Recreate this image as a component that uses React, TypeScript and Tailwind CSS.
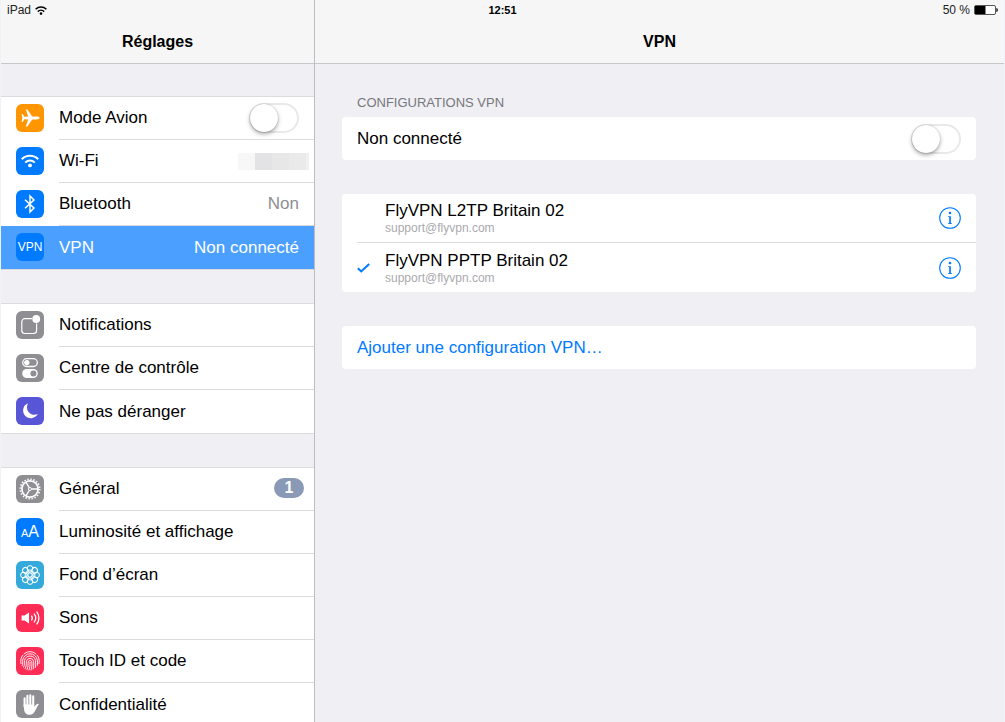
import type { ReactNode } from "react";

/* ---------- ICONS ---------- */

function IconTile({ color, children }: { color: string; children: ReactNode }) {
  return (
    <span
      className={`mb-0.5 flex h-7 w-7 shrink-0 items-center justify-center overflow-hidden rounded-md text-white ${color}`}
    >
      {children}
    </span>
  );
}

function PlaneIcon() {
  return (
    <svg viewBox="0 0 28 28" className="h-7 w-7" fill="currentColor">
      <path d="M23.6 14c0-.9-1.4-1.4-3-1.4h-4.4L11.4 5.4H9.8l2.4 7.2-3.9.2L6.8 10H5.6l.7 4-.7 4h1.2l1.5-2.8 3.9.2-2.4 7.2h1.6l4.8-7.2h4.4c1.6 0 3-.5 3-1.4z" />
    </svg>
  );
}

function WifiIcon() {
  return (
    <svg
      viewBox="0 0 28 28"
      className="h-7 w-7"
      fill="none"
      stroke="currentColor"
      strokeWidth="2"
    >
      <path d="M5.8 12.2a11.6 11.6 0 0 1 16.4 0" />
      <path d="M9.2 15.6a6.8 6.8 0 0 1 9.6 0" />
      <circle cx="14" cy="18.4" r="1.9" fill="currentColor" stroke="none" />
    </svg>
  );
}

function BluetoothIcon() {
  return (
    <svg
      viewBox="0 0 28 28"
      className="h-7 w-7"
      fill="none"
      stroke="currentColor"
      strokeWidth="1.5"
    >
      <path d="M9 9.8l9 8.2-4 4V6l4 4-9 8.2" />
    </svg>
  );
}

function NotificationsIcon() {
  return (
    <svg viewBox="0 0 28 28" className="h-7 w-7" fill="none">
      <path
        d="M16 7.7H8.8a3 3 0 0 0-3 3v8.8a3 3 0 0 0 3 3h8.8a3 3 0 0 0 3-3v-7"
        stroke="currentColor"
        strokeWidth="1.2"
      />
      <circle cx="20.2" cy="8" r="3.9" fill="currentColor" />
    </svg>
  );
}

function ControlCenterIcon() {
  return (
    <svg viewBox="0 0 28 28" className="h-7 w-7" fill="none">
      <rect x="6.7" y="4.7" width="14.6" height="7.8" rx="3.9" stroke="currentColor" strokeWidth="1.3" />
      <circle cx="10.8" cy="8.6" r="2.7" fill="currentColor" />
      <rect x="6.2" y="15" width="15.6" height="9" rx="4.5" fill="currentColor" />
      <circle cx="17.4" cy="19.5" r="3" fill="#8e8e93" />
    </svg>
  );
}

function MoonIcon() {
  return (
    <svg viewBox="0 0 28 28" className="h-7 w-7" fill="currentColor">
      <path d="M12 6.2a7.8 7.8 0 1 0 9.8 10.9c-3 1.4-6.6.9-8.8-1.6-2.4-2.6-2.6-6.4-1-9.3z" />
    </svg>
  );
}

function GearIcon() {
  return (
    <svg viewBox="0 0 28 28" className="h-7 w-7" fill="none" stroke="currentColor">
      <circle cx="14" cy="14" r="9.7" strokeWidth="1.8" strokeDasharray="1.5 1.547" />
      <circle cx="14" cy="14" r="8.1" strokeWidth="1.7" />
      <circle cx="14" cy="14" r="1.5" strokeWidth="1" />
      <path d="M15.5 14H22M13.2 12.7L10 7.2M13.2 15.3L10 20.8" strokeWidth="1.3" />
    </svg>
  );
}

const PETALS = [0, 45, 90, 135, 180, 225, 270, 315];

function FlowerIcon() {
  return (
    <svg viewBox="0 0 28 28" className="h-7 w-7" fill="none" stroke="currentColor" strokeWidth="1">
      {PETALS.map((angle) => (
        <circle key={angle} cx="14" cy="7.4" r="2.8" transform={`rotate(${angle} 14 14)`} />
      ))}
      {PETALS.map((angle) => (
        <circle key={angle} cx="14" cy="10.4" r="1.5" strokeWidth="0.6" transform={`rotate(${angle} 14 14)`} />
      ))}
      <circle cx="14" cy="14" r="2.2" />
    </svg>
  );
}

function SpeakerIcon() {
  return (
    <svg viewBox="0 0 28 28" className="h-7 w-7" fill="none" stroke="currentColor" strokeWidth="1.3">
      <path d="M5.6 11.4h3l4.4-3v11.2l-4.4-3h-3z" fill="currentColor" stroke="none" />
      <path d="M15.4 11.6a4 4 0 0 1 0 4.8" />
      <path d="M18 9.6a7 7 0 0 1 0 8.8" />
      <path d="M20.6 7.6a10 10 0 0 1 0 12.8" />
    </svg>
  );
}

function FingerprintIcon() {
  return (
    <svg
      viewBox="0 0 28 28"
      className="h-7 w-7"
      fill="none"
      stroke="currentColor"
      strokeWidth="0.9"
      strokeLinecap="round"
    >
      <path d="M8.4 6.6a9.4 9.4 0 0 1 11.2 0" />
      <path d="M5 16.6c-.8-4 .4-6.8 2-8.6M23 16.6c.8-4-.4-6.8-2-8.6" />
      <path d="M6.2 18.6c1-2 .2-3.4.5-5.6a7.4 7.4 0 0 1 14.6 0c.3 2 .3 3.6.1 5.4" />
      <path d="M7.6 20.2c1.3-2.4.6-4.6.9-6.6a5.6 5.6 0 0 1 11 0c.3 2.3.3 4.6-.2 7" />
      <path d="M9.2 21.6c1.5-2.6.9-4.9 1.2-7.4a3.7 3.7 0 0 1 7.2 0c.3 2.6.2 5.2-.5 7.8" />
      <path d="M11 22.6c1.4-2.8 1-5.2 1.2-7.8a1.9 1.9 0 0 1 3.6 0c.3 3 .1 5.6-.8 8.2" />
      <path d="M14 15.4c.1 2.8-.1 5.2-1 7.6" />
    </svg>
  );
}

function HandIcon() {
  return (
    <svg
      viewBox="0 0 28 28"
      className="h-7 w-7"
      fill="none"
      stroke="currentColor"
      strokeWidth="2.1"
      strokeLinecap="round"
    >
      <path d="M8.6 8.2v8M11.4 5.8v9M14.3 5.2v9M17.2 6.4v9" />
      <path
        d="M7.6 14.6h10.6v2.2l2.2-2.4c.8-.8 2-.8 2.4-.2-1.6 2-2.8 5.4-4.4 7.8-1 1.6-2.4 2.8-4.8 2.8-3.4 0-5-2.2-5.4-4.4z"
        fill="currentColor"
        stroke="none"
      />
    </svg>
  );
}

function InfoIcon() {
  return (
    <svg viewBox="0 0 22 22" className="h-[22px] w-[22px]" fill="none">
      <circle cx="11" cy="11" r="10.3" stroke="currentColor" strokeWidth="1.1" />
      <circle cx="11" cy="6" r="1.3" fill="currentColor" />
      <path d="M9 9.2h2.9v7H13v.8H9v-.8h1.2V10H9z" fill="currentColor" />
    </svg>
  );
}

function CheckIcon() {
  return (
    <svg viewBox="0 0 13 10" className="h-2.5 w-[13px]" fill="none" stroke="currentColor" strokeWidth="2">
      <path d="M.8 5.2l3.4 3.2L12.2 1" />
    </svg>
  );
}

/* ---------- CONTROLS ---------- */

function Switch({ id }: { id: string }) {
  return (
    <input
      type="checkbox"
      role="switch"
      id={id}
      className="flex h-[30px] w-[50px] shrink-0 cursor-pointer appearance-none items-center rounded-full border-2 border-[#e9e9e9] bg-white before:h-7 before:w-7 before:-ml-px before:rounded-full before:bg-white before:shadow-[0_2px_4px_rgba(0,0,0,0.35),0_0_1px_rgba(0,0,0,0.3)] before:transition-all checked:border-[#4cd964] checked:bg-[#4cd964] checked:before:ml-[19px]"
    />
  );
}

type RowProps = {
  icon: ReactNode;
  color: string;
  label: string;
  selected?: boolean;
  children?: ReactNode;
};

function Row({ icon, color, label, selected, children }: RowProps) {
  return (
    <li className="group">
      <a
        href="#"
        aria-current={selected ? "page" : undefined}
        className={
          selected
            ? "flex h-[43px] items-center gap-[15px] bg-[#4b9fff] pl-[15px] text-white"
            : "flex h-[43px] items-center gap-[15px] bg-white pl-[15px] text-black"
        }
      >
        <IconTile color={color}>{icon}</IconTile>
        <span
          className={
            selected
              ? "flex h-full flex-1 items-center justify-between pr-[15px]"
              : "flex h-full flex-1 items-center justify-between border-b border-[#dcdcde] pr-[15px] group-last:border-0"
          }
        >
          <span>{label}</span>
          {children}
        </span>
      </a>
    </li>
  );
}

function Group({ children }: { children: ReactNode }) {
  return <ul className="shrink-0 border-y border-[#dcdcde] bg-white">{children}</ul>;
}

/* ---------- VPN LIST ---------- */

const CONFIGS = [
  { name: "FlyVPN L2TP Britain 02", account: "support@flyvpn.com", active: false },
  { name: "FlyVPN PPTP Britain 02", account: "support@flyvpn.com", active: true },
];

function StatusBar() {
  return (
    <div className="z-10 col-span-full row-start-1 grid h-5 grid-cols-3 items-center self-start px-1.5 text-xs text-[#222]">
      <span className="flex items-center gap-1">
        iPad
        <svg viewBox="0 0 12 9" className="h-[9px] w-3" fill="none" stroke="black" strokeWidth="1.5">
          <path d="M.6 3.2a7.8 7.8 0 0 1 10.8 0M2.8 5.6a4.6 4.6 0 0 1 6.4 0" />
          <circle cx="6" cy="7.6" r="1.3" fill="black" stroke="none" />
        </svg>
      </span>
      <span className="text-center text-[11px] font-bold text-black">12:51</span>
      <span className="flex items-center justify-end gap-1">
        50 %
        <svg viewBox="0 0 24 10" className="h-2.5 w-6" fill="none">
          <rect x="0.5" y="0.5" width="21" height="9" rx="1.5" fill="white" stroke="#555" />
          <path d="M1 1h10.5v8H1z" fill="black" />
          <path d="M22.4 3c1 .4 1.4 1.2 1.4 2s-.4 1.6-1.4 2z" fill="black" />
        </svg>
      </span>
    </div>
  );
}

function Sidebar() {
  return (
    <nav className="col-start-1 row-start-1 flex min-h-0 flex-col border-r border-[#bcbcc2]">
      <header className="flex h-16 shrink-0 items-center justify-center border-b border-[#c8c7cc] bg-[#f6f6f6] pt-5">
        <h1 className="text-base font-bold">Réglages</h1>
      </header>

      <div className="flex min-h-0 flex-1 flex-col gap-[33px] overflow-y-auto pt-8 [scrollbar-width:none]">
        <Group>
          <li className="flex h-[43px] items-center gap-[15px] pl-[15px]">
            <IconTile color="bg-[#ff9500]">
              <PlaneIcon />
            </IconTile>
            <span className="flex h-full flex-1 items-center justify-between border-b border-[#dcdcde] pr-[15px]">
              <label htmlFor="airplane">Mode Avion</label>
              <Switch id="airplane" />
            </span>
          </li>
          <Row icon={<WifiIcon />} color="bg-[#007aff]" label="Wi-Fi">
            {/* network name, hidden */}
            <span className="-mr-2.5 flex h-[17px]">
              <span className="w-[17px] bg-[#f7f7f7]" />
              <span className="w-[17px] bg-[#e3e3e5]" />
              <span className="w-[17px] bg-[#e7e7e8]" />
              <span className="w-[17px] bg-[#eaeaea]" />
              <span className="w-[3px] bg-[#f0f0f0]" />
            </span>
          </Row>
          <Row icon={<BluetoothIcon />} color="bg-[#007aff]" label="Bluetooth">
            <span className="text-[#8e8e93]">Non</span>
          </Row>
          <Row
            icon={<span className="text-xs">VPN</span>}
            color="bg-[#007aff]"
            label="VPN"
            selected
          >
            <span>Non connecté</span>
          </Row>
        </Group>

        <Group>
          <Row icon={<NotificationsIcon />} color="bg-[#8e8e93]" label="Notifications" />
          <Row icon={<ControlCenterIcon />} color="bg-[#8e8e93]" label="Centre de contrôle" />
          <Row icon={<MoonIcon />} color="bg-[#5856d6]" label="Ne pas déranger" />
        </Group>

        <Group>
          <Row icon={<GearIcon />} color="bg-[#8e8e93]" label="Général">
            <span className="-mr-[5px] mb-0.5 flex h-5 w-[30px] items-center justify-center rounded-full bg-[#8a99b5] text-base font-bold text-white">
              1
            </span>
          </Row>
          <Row
            icon={
              <span className="flex items-baseline text-base leading-none">
                <span className="text-[11px]">A</span>A
              </span>
            }
            color="bg-[#007aff]"
            label="Luminosité et affichage"
          />
          <Row icon={<FlowerIcon />} color="bg-[#34aadc]" label="Fond d’écran" />
          <Row icon={<SpeakerIcon />} color="bg-[#ff2d55]" label="Sons" />
          <Row icon={<FingerprintIcon />} color="bg-[#ff2d55]" label="Touch ID et code" />
          <Row icon={<HandIcon />} color="bg-[#8e8e93]" label="Confidentialité" />
        </Group>
      </div>
    </nav>
  );
}

function VpnPanel() {
  return (
    <main className="col-start-2 row-start-1 flex min-h-0 flex-col">
      <header className="flex h-16 shrink-0 items-center justify-center border-b border-[#c8c7cc] bg-[#f6f6f6] pt-5">
        <h2 className="text-base font-bold">VPN</h2>
      </header>

      <div className="flex min-h-0 flex-1 flex-col overflow-y-auto pt-[29px] pr-7 pb-8 pl-[27px] [scrollbar-width:none]">
        <h3 className="pl-[15px] text-[13px] leading-5 text-[#77777c]">CONFIGURATIONS VPN</h3>
        <div className="mt-1 flex h-[43px] shrink-0 items-center justify-between rounded-[4px] bg-white px-[15px]">
          <label htmlFor="vpn">Non connecté</label>
          <Switch id="vpn" />
        </div>

        <ul className="mt-[34px] shrink-0 rounded-[4px] bg-white pl-[15px]">
          {CONFIGS.map((config) => (
            <li
              key={config.name}
              className="flex h-[49px] items-center border-b border-[#dcdcde] pr-[15px] last:border-0"
            >
              <span className="w-7 text-[#007aff]">{config.active && <CheckIcon />}</span>
              <span className="flex-1">
                <span className="block leading-5">{config.name}</span>
                <span className="block text-xs leading-[14px] text-[#aaaaae]">{config.account}</span>
              </span>
              <button type="button" aria-label={`Infos ${config.name}`} className="text-[#007aff]">
                <InfoIcon />
              </button>
            </li>
          ))}
        </ul>

        <button
          type="button"
          className="mt-[34px] flex h-[43px] shrink-0 items-center rounded-[4px] bg-white px-[15px] text-[#007aff]"
        >
          Ajouter une configuration VPN…
        </button>
      </div>
    </main>
  );
}

export default function App() {
  return (
    <div className="grid h-screen grid-cols-[314px_1fr] grid-rows-[minmax(0,1fr)] overflow-hidden border-x border-[#eef3fb] bg-[#efeff4] font-['Liberation_Sans',Arial,sans-serif] text-[17px] leading-6 text-black">
      <StatusBar />
      <Sidebar />
      <VpnPanel />
    </div>
  );
}
